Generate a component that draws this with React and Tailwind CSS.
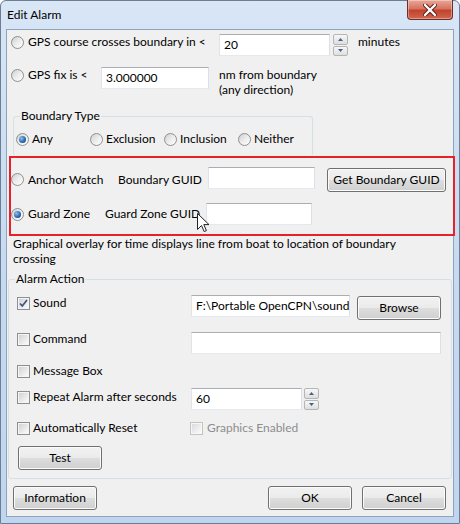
import React from 'react'

const Radio = ({ checked }) => (
  <span className="flex h-[13px] w-[13px] shrink-0 items-center justify-center rounded-full border border-[#8e8f8f] bg-gradient-to-br from-[#cfcfcf] via-[#ececec] to-[#ffffff]">
    {checked && (
      <span className="h-[7px] w-[7px] rounded-full bg-[radial-gradient(circle_at_35%_35%,#8cc0f0,#2463ad_60%,#173d6e)]" />
    )}
  </span>
)

const Check = ({ checked, disabled }) => (
  <span
    className={`flex h-[13px] w-[13px] shrink-0 items-center justify-center border p-[1px] ${
      disabled ? 'border-[#c4c4c4] bg-[#f7f7f7]' : 'border-[#8e8f8f] bg-[#f4f4f4]'
    }`}
  >
    <span
      className={`flex h-full w-full items-center justify-center bg-gradient-to-br ${
        disabled ? 'from-[#dcdcdc] to-[#fafafa]' : 'from-[#d2d2d2] to-[#fbfbfb]'
      }`}
    >
      {checked && (
        <svg width="9" height="9" viewBox="0 0 9 9">
          <path d="M1 4.5 L3.3 7 L8 1" fill="none" stroke="#3d5383" strokeWidth="1.7" />
        </svg>
      )}
    </span>
  </span>
)

const TextBox = ({ w, value, className = '' }) => (
  <div
    className={`flex h-[22px] shrink-0 items-center overflow-hidden whitespace-nowrap border border-[#abadb3] border-b-[#e3e9ef] border-l-[#e2e3ea] border-r-[#dbdfe6] bg-white pl-[4px] ${w} ${className}`}
  >
    {value}
  </div>
)

const SpinHalf = ({ up }) => (
  <div className="flex flex-1 items-center justify-center rounded-[2px] border border-[#b5b5b5] bg-gradient-to-b from-[#f7f7f7] to-[#dedede]">
    <svg width="5" height="3" viewBox="0 0 5 3">
      <path d={up ? 'M0 3 L2.5 0 L5 3Z' : 'M0 0 L2.5 3 L5 0Z'} fill="#4a5f86" />
    </svg>
  </div>
)

const Spin = ({ className = '' }) => (
  <div className={`flex h-[22px] w-[15px] shrink-0 flex-col gap-[1px] ${className}`}>
    <SpinHalf up />
    <SpinHalf />
  </div>
)

const Btn = ({ w, children, className = '' }) => (
  <div
    className={`flex h-[24px] shrink-0 items-center justify-center rounded-[3px] border border-[#707070] bg-[linear-gradient(#f2f2f2_0%,#ebebeb_48%,#dddddd_52%,#cfcfcf_100%)] shadow-[inset_0_0_0_1px_#fbfbfb] ${w} ${className}`}
  >
    {children}
  </div>
)

const Cursor = () => (
  <svg width="13" height="20" viewBox="0 0 13 20" className="absolute left-[186px] top-[55px]">
    <path
      d="M0.5 0.5 L0.5 16.5 L4.5 12.5 L7.2 18.6 L9.4 17.6 L6.8 11.6 L12 11.6 Z"
      fill="white"
      stroke="#222"
      strokeWidth="1"
      strokeLinejoin="round"
    />
  </svg>
)

export default function App() {
  return (
    <div className="h-[524px] w-[460px] bg-white font-['Lato',sans-serif] text-[12px] leading-[16px] text-black">
      <div className="flex h-full w-full flex-col rounded-t-[6px] border border-[#6d7d92] bg-gradient-to-b from-[#d8e6f6] via-[#c6daf1] to-[#c0d5ef] px-[5px] pb-[6px]">
        {/* title bar */}
        <div className="flex h-[28px] shrink-0 items-start justify-between">
          <div className="ml-[1px] mt-[6px]">Edit Alarm</div>
          <div className="-mt-[1px] mr-[1px] flex h-[20px] w-[46px] items-center justify-center rounded-b-[4px] border border-t-0 border-[#6e2e26] bg-[linear-gradient(#e9a899_0%,#d8735f_45%,#c2432c_55%,#d0664f_100%)] shadow-[inset_0_0_0_1px_rgba(255,255,255,0.35)]">
            <svg width="14" height="12" viewBox="0 0 14 12">
              <path d="M2 1 L12 11 M12 1 L2 11" stroke="#5a1e16" strokeWidth="4.2" strokeLinecap="round" />
              <path d="M2 1 L12 11 M12 1 L2 11" stroke="white" strokeWidth="2.4" strokeLinecap="round" />
            </svg>
          </div>
        </div>

        {/* client area */}
        <div className="flex h-[488px] flex-col border border-[#8ea3bc] bg-[#f0f0f0]">
          {/* GPS course */}
          <div className="mt-[4px] flex h-[22px] items-start">
            <div className="flex h-[16px] w-[212px] items-center gap-[4px] pl-[4px]">
              <Radio />
              <span>GPS course crosses boundary in &lt;</span>
            </div>
            <TextBox w="w-[111px]" value="20" />
            <Spin className="ml-[3px]" />
            <div className="ml-[10px] flex h-[16px] items-center">minutes</div>
          </div>

          {/* GPS fix */}
          <div className="mt-[11px] flex items-start">
            <div className="flex h-[16px] w-[94px] items-center gap-[4px] pl-[4px]">
              <Radio />
              <span>GPS fix is &lt;</span>
            </div>
            <TextBox w="w-[108px]" value="3.000000" />
            <div className="ml-[10px] leading-[15px]">
              nm from boundary
              <br />
              (any direction)
            </div>
          </div>

          {/* Boundary type */}
          <fieldset className="ml-[6px] mt-[11px] w-[300px] rounded-[3px] border border-[#d5dfe5] border-b-transparent pb-[8px]">
            <legend className="ml-[6px] px-[1px]">Boundary Type</legend>
            <div className="mt-[7px] flex h-[16px] pl-[2px]">
              {[
                ['Any', true],
                ['Exclusion', false],
                ['Inclusion', false],
                ['Neither', false],
              ].map(([label, on]) => (
                <div key={label} className="flex w-[74px] items-center gap-[3px]">
                  <Radio checked={on} />
                  <span>{label}</span>
                </div>
              ))}
            </div>
          </fieldset>

          {/* highlighted box */}
          <div className="relative ml-[2px] w-[446px] border-2 border-[#e5222a] pb-[9px]">
            <div className="mt-[9px] flex h-[25px] items-center">
              <div className="flex w-[107px] items-center gap-[4px]">
                <Radio />
                <span>Anchor Watch</span>
              </div>
              <div className="w-[90px]">Boundary GUID</div>
              <TextBox w="w-[107px]" value="" className="self-start" />
              <Btn w="w-[119px]" className="ml-[12px] mt-[1px] self-start">
                Get Boundary GUID
              </Btn>
            </div>
            <div className="mt-[11px] flex h-[22px] items-center">
              <div className="flex w-[94px] items-center gap-[4px]">
                <Radio checked />
                <span>Guard Zone</span>
              </div>
              <div className="w-[101px]">Guard Zone GUID</div>
              <TextBox w="w-[106px]" value="" />
            </div>
            <Cursor />
          </div>

          <div className="ml-[6px] leading-[15px]">
            Graphical overlay for time displays line from boat to location of boundary
            <br />
            crossing
          </div>

          {/* Alarm action */}
          <fieldset className="ml-[1px] mt-[5px] w-[444px] rounded-[3px] border border-[#d5dfe5] pb-[8px]">
            <legend className="ml-[6px] px-[1px]">Alarm Action</legend>

            <div className="mt-[8px] flex items-start">
              <div className="flex h-[16px] w-[182px] items-center gap-[3px] pl-[8px]">
                <Check checked />
                <span>Sound</span>
              </div>
              <TextBox w="w-[159px]" value="F:\Portable OpenCPN\sounds" />
              <Btn w="w-[84px]" className="ml-[7px] mt-[1px]">
                Browse
              </Btn>
            </div>

            <div className="mt-[11px] flex items-start">
              <div className="flex h-[16px] w-[182px] items-center gap-[3px] pl-[8px]">
                <Check />
                <span>Command</span>
              </div>
              <TextBox w="w-[250px]" value="" className="mt-[1px]" />
            </div>

            <div className="mt-[9px] flex h-[16px] items-center gap-[3px] pl-[8px]">
              <Check />
              <span>Message Box</span>
            </div>

            <div className="mt-[9px] flex items-start">
              <div className="mt-[1px] flex h-[16px] w-[182px] items-center gap-[3px] pl-[8px]">
                <Check />
                <span>Repeat Alarm after seconds</span>
              </div>
              <TextBox w="w-[111px]" value="60" />
              <Spin className="ml-[2px]" />
            </div>

            <div className="mt-[10px] flex h-[16px] items-center">
              <div className="flex w-[181px] items-center gap-[3px] pl-[8px]">
                <Check />
                <span>Automatically Reset</span>
              </div>
              <div className="flex items-center gap-[4px] text-[#8d8d8d]">
                <Check disabled />
                <span>Graphics Enabled</span>
              </div>
            </div>

            <Btn w="w-[84px]" className="ml-[9px] mt-[10px]">
              Test
            </Btn>
          </fieldset>

          {/* dialog buttons */}
          <div className="mt-[7px] flex">
            <Btn w="w-[84px]" className="ml-[6px]">
              Information
            </Btn>
            <Btn w="w-[84px]" className="ml-[171px]">
              OK
            </Btn>
            <Btn w="w-[84px]" className="ml-[10px]">
              Cancel
            </Btn>
          </div>
        </div>
      </div>
    </div>
  )
}
